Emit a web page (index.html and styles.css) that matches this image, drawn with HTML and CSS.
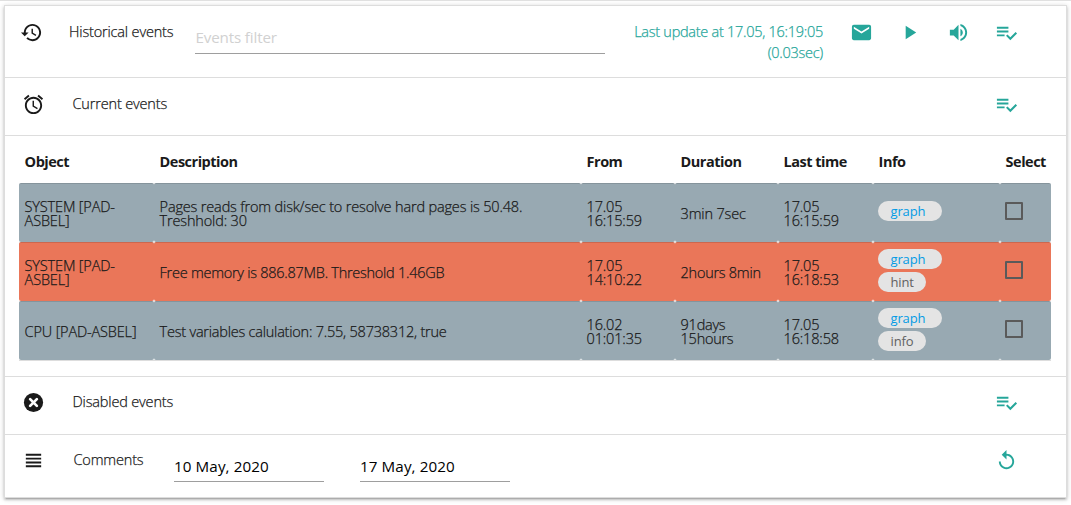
FILE: index.html
```html
<!DOCTYPE html>
<html lang="en">
<head>
<meta charset="utf-8">
<title>Events</title>
<link rel="stylesheet" href="styles.css">
</head>
<body>
<svg class="defs" aria-hidden="true">
  <symbol id="check-list" viewBox="0 0 24 24"><path d="M14 10H2v2h12v-2zm0-4H2v2h12V6zM2 16h8v-2H2v2zm19.5-4.5L23 13l-6.99 7-4.51-4.5L13 14l3.01 3 5.49-5.5z"/></symbol>
</svg>
<main class="card">
  <section class="row historical">
    <svg class="icon lead" viewBox="0 0 24 24"><path d="M13 3c-4.97 0-9 4.03-9 9H1l3.89 3.89.07.14L9 12H6c0-3.87 3.13-7 7-7s7 3.13 7 7-3.13 7-7 7c-1.93 0-3.68-.79-4.94-2.06l-1.42 1.42C8.27 19.99 10.51 21 13 21c4.97 0 9-4.03 9-9s-4.03-9-9-9zm-1 5v5l4.28 2.54.72-1.21-3.5-2.08V8H12z"/></svg>
    <span class="title">Historical events</span>
    <div class="filter">Events filter</div>
    <div class="update"><span>Last update at 17.05, 16:19:05</span><br>(0.03sec)</div>
    <div class="tools">
      <svg class="icon" viewBox="0 0 24 24"><path d="M20 4H4c-1.1 0-1.99.9-1.99 2L2 18c0 1.1.9 2 2 2h16c1.1 0 2-.9 2-2V6c0-1.1-.9-2-2-2zm0 4l-8 5-8-5V6l8 5 8-5v2z"/></svg>
      <svg class="icon" viewBox="0 0 24 24"><path d="M8 5v14l11-7z"/></svg>
      <svg class="icon" viewBox="0 0 24 24"><path d="M3 9v6h4l5 5V4L7 9H3zm13.5 3c0-1.77-1.02-3.29-2.5-4.03v8.05c1.48-.73 2.5-2.25 2.5-4.02zM14 3.23v2.06c2.89.86 5 3.54 5 6.71s-2.11 5.85-5 6.71v2.06c4.01-.91 7-4.49 7-8.77s-2.99-7.86-7-8.77z"/></svg>
      <svg class="icon"><use href="#check-list"/></svg>
    </div>
  </section>
  <section class="row current">
    <svg class="icon lead" viewBox="0 0 24 24"><path d="M22 5.72l-4.6-3.86-1.29 1.53 4.6 3.86L22 5.72zM7.88 3.39L6.6 1.86 2 5.71l1.29 1.53 4.59-3.85zM12.5 8H11v6l4.75 2.85.75-1.23-4-2.37V8zM12 4c-4.97 0-9 4.03-9 9s4.02 9 9 9c4.97 0 9-4.03 9-9s-4.03-9-9-9zm0 16c-3.87 0-7-3.13-7-7s3.13-7 7-7 7 3.13 7 7-3.13 7-7 7z"/></svg>
    <span class="title">Current events</span>
    <div class="tools"><svg class="icon"><use href="#check-list"/></svg></div>
  </section>
  <section class="body">
    <table class="events">
      <colgroup><col class="c-object"><col class="c-desc"><col class="c-from"><col class="c-dur"><col class="c-last"><col class="c-info"><col class="c-select"></colgroup>
      <thead><tr><th>Object</th><th>Description</th><th>From</th><th>Duration</th><th>Last time</th><th>Info</th><th>Select</th></tr></thead>
      <tbody>
        <tr class="muted">
          <td>SYSTEM [PAD-<br>ASBEL]</td><td>Pages reads from disk/sec to resolve hard pages is 50.48.<br>Treshhold: 30</td><td>17.05<br>16:15:59</td><td>3min 7sec</td><td>17.05<br>16:15:59</td>
          <td class="info"><span class="badge link">graph</span></td><td class="select"><span class="box"></span></td>
        </tr>
        <tr class="alert">
          <td>SYSTEM [PAD-<br>ASBEL]</td><td class="tight">Free memory is 886.87MB. Threshold 1.46GB</td><td>17.05<br>14:10:22</td><td class="tight">2hours 8min</td><td>17.05<br>16:18:53</td>
          <td class="info pair"><span class="badge link">graph</span><span class="badge">hint</span></td><td class="select"><span class="box"></span></td>
        </tr>
        <tr class="muted">
          <td>CPU [PAD-ASBEL]</td><td class="snug">Test variables calulation: 7.55, 58738312, true</td><td>16.02<br>01:01:35</td><td class="tight">91days<br>15hours</td><td>17.05<br>16:18:58</td>
          <td class="info pair"><span class="badge link">graph</span><span class="badge">info</span></td><td class="select"><span class="box"></span></td>
        </tr>
      </tbody>
    </table>
  </section>
  <section class="row disabled">
    <svg class="icon lead" viewBox="0 0 24 24"><circle cx="12" cy="12" r="10"/><path class="cross" d="M8.5 8.5l7 7m0-7l-7 7"/></svg>
    <span class="title">Disabled events</span>
    <div class="tools"><svg class="icon"><use href="#check-list"/></svg></div>
  </section>
  <section class="row comments">
    <svg class="icon lead" viewBox="0 0 24 24"><path d="M4 15h16v-2H4v2zm0 4h16v-2H4v2zm0-8h16V9H4v2zm0-6v2h16V5H4z"/></svg>
    <span class="title">Comments</span>
    <div class="date">10 May, 2020</div>
    <div class="date">17 May, 2020</div>
    <div class="tools"><svg class="icon" viewBox="0 0 24 24"><path d="M12 5V1L7 6l5 5V7c3.31 0 6 2.69 6 6s-2.69 6-6 6-6-2.69-6-6H4c0 4.42 3.58 8 8 8s8-3.58 8-8-3.58-8-8-8z"/></svg></div>
  </section>
</main>
</body>
</html>
```

FILE: styles.css
```css
* { box-sizing: border-box; }
body {
  margin: 0;
  padding: 4px 4px 0;
  border-top: 1px solid #e0e0e0;
  height: 505px;
  overflow: hidden;
  background: #fff;
  color: #1a1a1a;
  font: 300 14.5px/21px "Open Sans", "Noto Sans", sans-serif;
  letter-spacing: -0.16px;
  -webkit-text-stroke: 0.25px currentColor;
}
.defs { display: none; }
.card {
  width: 1063px;
  height: 493px;
  border: 1px solid #ddd;
  background: #fff;
  box-shadow: 0 2px 2px rgba(0,0,0,.14), 0 3px 1px -2px rgba(0,0,0,.12), 0 1px 5px rgba(0,0,0,.2);
}
.row {
  display: flex;
  align-items: flex-start;
  border-bottom: 1px solid #ddd;
  padding: 15px 48px 0 17px;
}
.historical { height: 72px; padding-left: 15px; }
.current, .disabled { height: 58px; }
.comments { height: 63px; border-bottom: 0; }
.disabled, .comments { padding-top: 14px; }
.icon { width: 23px; height: 23px; fill: currentColor; flex: none; }
.title { margin: 0 0 0 27.5px; white-space: nowrap; }
.historical .title { margin-left: 26px; width: 105px; }
.comments .title { margin-left: 28.5px; width: 71.5px; }
.cross { fill: none; stroke: #fff; stroke-width: 2.8; stroke-linecap: round; }
.tools { display: flex; gap: 25.5px; margin-left: auto; color: #26a69a; }
.filter {
  width: 410px;
  height: 33px;
  margin-left: 21px;
  padding: 6px 0 0 0.5px;
  border-bottom: 1px solid #9e9e9e;
  color: #d1d1d1;
  font-weight: 400;
  font-size: 15.2px;
  -webkit-text-stroke: 0;
}
.update { width: 218px; text-align: right; color: #26a69a; white-space: nowrap; letter-spacing: -0.27px; }
.date {
  width: 150px;
  height: 31px;
  margin: 2px 0 0 29px;
  padding-top: 5px;
  border-bottom: 1px solid #9e9e9e;
  color: #000;
  font-weight: 400;
  font-size: 15.2px;
  letter-spacing: 0.1px;
  -webkit-text-stroke: 0;
}
.date + .date { margin-left: 36px; }
.body { height: 241px; padding: 5px 14px 0; border-bottom: 1px solid #ddd; }
.events { width: 1032px; table-layout: fixed; border-collapse: separate; border-spacing: 0; border-bottom: 1px solid #ddd; line-height: 14px; }
.c-object { width: 135px; }
.c-desc { width: 427px; }
.c-from { width: 94px; }
.c-dur { width: 103px; }
.c-last { width: 95px; }
.c-info { width: 127px; }
.c-select { width: 51px; }
th { height: 42px; padding: 0 0 0 5.6px; text-align: left; font-weight: 700; letter-spacing: -0.5px; white-space: nowrap; -webkit-text-stroke: 0; }
td { height: 59px; padding: 2px 0 0 5.6px; vertical-align: middle; border-radius: 2px; border-top: 1px solid rgba(0,0,0,.12); white-space: nowrap; }
.muted td { background: #98a9b2; }
.alert td { background: #ea7659; }
.tight { letter-spacing: -0.26px; }
.snug { letter-spacing: -0.22px; }
.events .info { padding: 0 5px 1px; }
.events .pair { padding-bottom: 3px; }
.badge {
  display: block;
  width: 48px;
  height: 20px;
  margin-bottom: 3px;
  border-radius: 10px;
  background: #e4e4e4;
  color: #616161;
  font: 500 13px/20px "Open Sans", "Noto Sans", sans-serif;
  letter-spacing: -0.15px;
  padding-left: 12.5px;
  -webkit-text-stroke: 0;
}
.pair .badge:last-child { margin-bottom: 0; }
.badge.link { width: 64px; color: #039be5; }
.events .select { padding: 0 5px 4px; }
.box { display: block; width: 18px; height: 18px; border: 2px solid #5a5a5a; border-radius: 1px; }
```
